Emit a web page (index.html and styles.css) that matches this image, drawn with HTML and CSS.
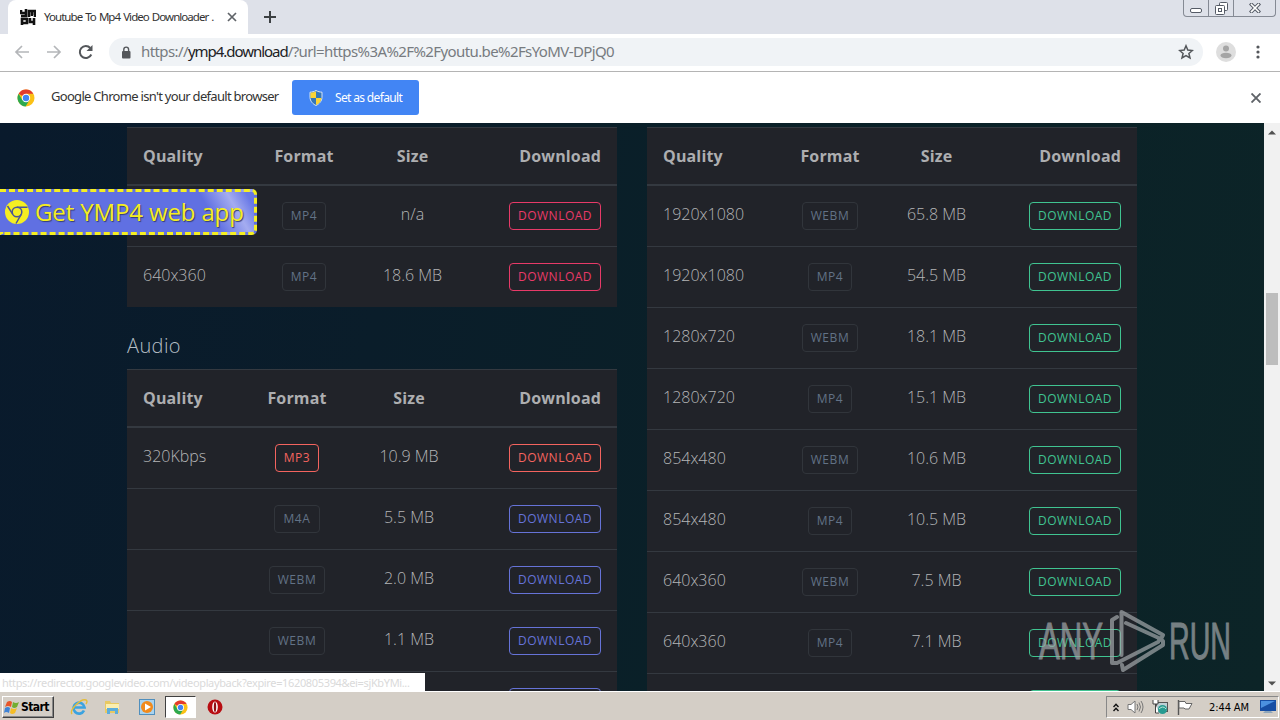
FILE: index.html
```html
<!DOCTYPE html>
<html lang="en">
<head>
    <meta charset="UTF-8">
    <title>Youtube To Mp4 Video Downloader</title>
    <link rel="stylesheet" href="styles.css">
</head>
<body>
    <svg class="defs" width="0" height="0">
        <symbol id="chrome" viewBox="0 0 18 18">
            <circle cx="9" cy="9" r="8.5" fill="#fbc116"/>
            <path d="M9 9 1.6 4.8A8.5 8.5 0 0 1 16.4 4.8H9z" fill="#e33b2e"/>
            <path d="M1.6 4.8A8.5 8.5 0 0 0 8.6 17.5L12.5 11 9 9 5.3 11z" fill="#2da94f"/>
            <circle cx="9" cy="9" r="4.2" fill="#fff"/>
            <circle cx="9" cy="9" r="3.2" fill="#4285f4"/>
        </symbol>
    </svg>

    <div class="tabstrip">
        <div class="tab">
            <svg width="16" height="16" viewBox="0 0 16 16" fill="none" stroke="#111" stroke-width="2.600">
                <path d="M1 1v3h5M6 0v7H1M9 8V2h6v6M12 2v5M2 16v-6h5v4H2M10 9v4h5M14 9v7"/>
            </svg>
            <span class="tab-title">Youtube To Mp4 Video Downloader .</span>
            <svg width="10" height="10" viewBox="0 0 10 10" stroke="#5f6368" stroke-width="1.7"><path d="M1 1l8 8M9 1l-8 8"/></svg>
        </div>
        <svg class="new-tab" width="12" height="12" viewBox="0 0 12 12" stroke="#3c4043" stroke-width="2"><path d="M6 0v12M0 6h12"/></svg>
        <div class="window-buttons">
            <span class="win-min"><svg width="12" height="5"><rect x=".5" y=".5" width="11" height="4" rx="1.5" fill="#fff" stroke="#555b66"/></svg></span>
            <span class="win-max"><svg width="13" height="13" fill="#fff" stroke="#555b66"><rect x="4.500" y=".5" width="8" height="8" rx="1"/><rect x=".5" y="3.500" width="9" height="9" rx="1"/><rect x="3.500" y="6.500" width="3" height="3"/></svg></span>
            <span class="win-close"><svg width="12" height="10" viewBox="0 0 12 10" stroke-linecap="square"><path d="M2.500 1.500l7 7M9.500 1.500l-7 7" stroke="#555b66" stroke-width="3.600"/><path d="M2.500 1.500l7 7M9.500 1.500l-7 7" stroke="#fff" stroke-width="1.600"/></svg></span>
        </div>
    </div>

    <div class="toolbar">
        <svg class="nav" width="16" height="16" viewBox="0 0 16 16" fill="none" stroke="#b4b6b9" stroke-width="1.7"><path d="M15 8H2M8 2L2 8l6 6"/></svg>
        <svg class="nav" width="16" height="16" viewBox="0 0 16 16" fill="none" stroke="#b4b6b9" stroke-width="1.7"><path d="M1 8h13M8 2l6 6-6 6"/></svg>
        <svg class="nav" width="16" height="16" viewBox="0 0 16 16" fill="none" stroke="#54575b" stroke-width="2"><path d="M13.300 10.500A6 6 0 1 1 12.300 4"/><path d="M14.500 1v6h-6z" fill="#54575b" stroke="none"/></svg>
        <div class="omnibox">
            <svg width="10" height="13" viewBox="0 0 10 13"><rect x="1" y="5" width="8.500" height="7.500" rx="1" fill="#54575b"/><path d="M2.800 5V3.500a2.400 2.400 0 0 1 4.800 0V5" fill="none" stroke="#54575b" stroke-width="1.400"/></svg>
            <span class="url">https://<b>ymp4.download</b>/?url=https%3A%2F%2Fyoutu.be%2FsYoMV-DPjQ0</span>
            <svg class="star" width="16" height="16" viewBox="0 0 16 16" fill="none" stroke="#54575b" stroke-width="1.500"><path d="M8 1.800l1.800 4.300 4.600.4-3.500 3 1.100 4.500L8 11.600 4 14l1.100-4.500-3.500-3 4.600-.4z"/></svg>
        </div>
        <svg class="avatar" width="20" height="20" viewBox="0 0 20 20"><circle cx="10" cy="10" r="10" fill="#dedede"/><circle cx="10" cy="6.500" r="3" fill="#a5a5a5"/><ellipse cx="10" cy="13.500" rx="5.500" ry="2.700" fill="#a5a5a5"/></svg>
        <svg class="menu" width="4" height="14" fill="#54575b"><circle cx="2" cy="2" r="1.600"/><circle cx="2" cy="7" r="1.600"/><circle cx="2" cy="12" r="1.600"/></svg>
    </div>

    <div class="infobar">
        <svg width="18" height="18"><use href="#chrome"/></svg>
        <span class="infobar-text">Google Chrome isn't your default browser</span>
        <button class="set-default">
            <svg width="14" height="16" viewBox="0 0 14 16"><path d="M7 .5c2 1.200 4 1.600 6 1.700v5c0 4-3 7-6 8.300C4 14.200 1 11.200 1 7.200v-5C3 2.100 5 1.700 7 .5z" fill="#3577b8" stroke="#d5e4f5"/><path d="M7 1.200V8H1.500V2.700C3.500 2.600 5.500 2.200 7 1.200zM7 8h5.500c-.3 3.500-2.800 5.900-5.500 7z" fill="#fbd435"/></svg>
            <span>Set as default</span>
        </button>
        <svg class="infobar-close" width="10" height="10" viewBox="0 0 10 10" stroke="#5f6368" stroke-width="1.900"><path d="M.5.5l9 9M9.500.5l-9 9"/></svg>
    </div>

    <div class="viewport">
        <main class="page">
            <div class="column">
                <table class="table video-table">
                    <colgroup><col class="quality"><col class="format"><col class="size"><col></colgroup>
                    <thead><tr><th>Quality</th><th>Format</th><th>Size</th><th>Download</th></tr></thead>
                    <tbody>
                        <tr><td></td><td><span class="btn muted">MP4</span></td><td>n/a</td><td><a class="btn pink">DOWNLOAD</a></td></tr>
                        <tr><td>640x360</td><td><span class="btn muted">MP4</span></td><td>18.6 MB</td><td><a class="btn pink">DOWNLOAD</a></td></tr>
                    </tbody>
                </table>
                <h5>Audio</h5>
                <table class="table audio-table">
                    <colgroup><col class="quality"><col class="format"><col class="size"><col></colgroup>
                    <thead><tr><th>Quality</th><th>Format</th><th>Size</th><th>Download</th></tr></thead>
                    <tbody>
                        <tr><td>320Kbps</td><td><span class="btn orange">MP3</span></td><td>10.9 MB</td><td><a class="btn orange">DOWNLOAD</a></td></tr>
                        <tr><td></td><td><span class="btn muted">M4A</span></td><td>5.5 MB</td><td><a class="btn indigo">DOWNLOAD</a></td></tr>
                        <tr><td></td><td><span class="btn muted">WEBM</span></td><td>2.0 MB</td><td><a class="btn indigo">DOWNLOAD</a></td></tr>
                        <tr><td></td><td><span class="btn muted">WEBM</span></td><td>1.1 MB</td><td><a class="btn indigo">DOWNLOAD</a></td></tr>
                        <tr><td></td><td></td><td></td><td><a class="btn indigo">DOWNLOAD</a></td></tr>
                    </tbody>
                </table>
            </div>
            <div class="column">
                <table class="table mute-table">
                    <colgroup><col class="quality"><col class="format"><col class="size"><col></colgroup>
                    <thead><tr><th>Quality</th><th>Format</th><th>Size</th><th>Download</th></tr></thead>
                    <tbody>
                        <tr><td>1920x1080</td><td><span class="btn muted">WEBM</span></td><td>65.8 MB</td><td><a class="btn green">DOWNLOAD</a></td></tr>
                        <tr><td>1920x1080</td><td><span class="btn muted">MP4</span></td><td>54.5 MB</td><td><a class="btn green">DOWNLOAD</a></td></tr>
                        <tr><td>1280x720</td><td><span class="btn muted">WEBM</span></td><td>18.1 MB</td><td><a class="btn green">DOWNLOAD</a></td></tr>
                        <tr><td>1280x720</td><td><span class="btn muted">MP4</span></td><td>15.1 MB</td><td><a class="btn green">DOWNLOAD</a></td></tr>
                        <tr><td>854x480</td><td><span class="btn muted">WEBM</span></td><td>10.6 MB</td><td><a class="btn green">DOWNLOAD</a></td></tr>
                        <tr><td>854x480</td><td><span class="btn muted">MP4</span></td><td>10.5 MB</td><td><a class="btn green">DOWNLOAD</a></td></tr>
                        <tr><td>640x360</td><td><span class="btn muted">WEBM</span></td><td>7.5 MB</td><td><a class="btn green">DOWNLOAD</a></td></tr>
                        <tr><td>640x360</td><td><span class="btn muted">MP4</span></td><td>7.1 MB</td><td><a class="btn green">DOWNLOAD</a></td></tr>
                        <tr><td></td><td></td><td></td><td><a class="btn green">DOWNLOAD</a></td></tr>
                    </tbody>
                </table>
            </div>
        </main>

        <div class="scrollbar">
            <svg width="8" height="5" fill="#505050"><path d="M0 4.500L4 .5l4 4z"/></svg>
            <div class="thumb"></div>
            <svg width="8" height="5" fill="#505050"><path d="M0 .5l4 4 4-4z"/></svg>
        </div>

        <a class="web-app">
            <svg width="24" height="24" viewBox="0 0 24 24"><circle cx="12" cy="12" r="12" fill="#f5ee22"/><circle cx="12" cy="12" r="4.800" fill="none" stroke="#4c5596" stroke-width="1.500"/><path d="M12 7.200h10.500M7.800 14.400L2.500 6M16.200 14.400L11 23.500" stroke="#4c5596" stroke-width="1.500"/></svg>
            <span>Get YMP4 web app</span>
        </a>
        <div class="status">https://redirector.googlevideo.com/videoplayback?expire=1620805394&amp;ei=sjKbYMi...</div>
        <svg class="watermark" width="196" height="64" viewBox="0 0 196 64">
            <g fill="#a3a8ab" stroke="#a3a8ab" font-size="51">
                <text x="1" y="50" textLength="64" lengthAdjust="spacingAndGlyphs">ANY</text>
                <text x="131" y="50" textLength="62" lengthAdjust="spacingAndGlyphs">RUN</text>
            </g>
            <path d="M79 8l-5 3v43h5l41-21M83.500 46V3L125 26l-2 4-35-16M84 56l1 5 40-25v-4l-4-2" fill="none" stroke="#a3a8ab" stroke-width="4" stroke-linejoin="round" stroke-linecap="round"/>
        </svg>
    </div>

    <div class="taskbar">
        <button class="start">
            <svg width="16" height="16" viewBox="0 0 16 16"><path d="M3 3q3-2 5 0L7 8Q4 6 1 8z" fill="#e8562a"/><path d="M9 3q3 2 6 0l-2 5q-3 2-5 0z" fill="#73ae32"/><path d="M1 9q3-2 5 0l-1 5q-3-2-5 0z" fill="#3f83d6"/><path d="M7 9q3 2 6 0l-2 5q-3 2-5 0z" fill="#f5bd26"/></svg>
            <span>Start</span>
        </button>
        <div class="launchers">
            <span class="launcher"><svg width="18" height="18" viewBox="0 0 18 18" fill="none"><path d="M14 12.500a5.500 5.500 0 1 1 .5-3H5" stroke="#3ba3e0" stroke-width="2.700"/><path d="M2 16C-1 12 11 0 16 2q2 1 0 4" stroke="#e5bd38" stroke-width="1.400"/></svg></span>
            <span class="launcher"><svg width="17" height="16" viewBox="0 0 17 16"><path d="M1 2h5l1 2h8v10H1z" fill="#e8c963"/><path d="M2 5h13v5H2z" fill="#fbeeb0"/><path d="M3 15V9h11v6h-3v-3H6v3z" fill="#5caddc"/></svg></span>
            <span class="launcher"><svg width="16" height="16" viewBox="0 0 16 16"><rect x=".5" y=".5" width="15" height="15" fill="#a9d3ef" stroke="#508fbd"/><circle cx="8" cy="8" r="6" fill="#f18a1c"/><path d="M6 4.500v7L12 8z" fill="#fff"/></svg></span>
            <span class="launcher active"><svg width="15" height="15"><use href="#chrome"/></svg></span>
            <span class="launcher"><svg width="16" height="16" viewBox="0 0 16 16"><circle cx="8" cy="8" r="7.500" fill="#b80d12"/><ellipse cx="8" cy="8" rx="2.800" ry="5.500" fill="#fff"/><ellipse cx="8" cy="8" rx="1.200" ry="5" fill="#901014"/></svg></span>
        </div>
        <div class="tray">
            <svg width="6" height="9" viewBox="0 0 6 9" fill="none" stroke="#111" stroke-width="1.400"><path d="M.5 4L3 1.200 5.500 4M.5 8L3 5.200 5.500 8"/></svg>
            <svg width="17" height="14" viewBox="0 0 17 14" fill="none" stroke="#777"><path d="M1 4.500h3L8 1v12L4 9.500H1z" fill="#fff"/><path d="M10 4q2 3 0 6M12 2.500q3 4.500 0 9M14 1q4 6 0 12"/></svg>
            <svg width="17" height="16" viewBox="0 0 17 16"><rect x="4.500" y="3.500" width="11" height="9" fill="#bdd0d5" stroke="#555"/><path d="M1 1v4h5V1M3.500 5v9H7" fill="#fff" stroke="#444"/><circle cx="10.500" cy="10.500" r="4.500" fill="#279b91"/><path d="M7 10q4-4 7 0" fill="none" stroke="#b7e5d5"/></svg>
            <svg width="16" height="15" viewBox="0 0 16 15"><path d="M1.500 0v15" stroke="#555" stroke-width="1.400"/><path d="M2 1.500h6l1 2h6L12 9H8L7 8H2z" fill="#fff" stroke="#666"/></svg>
            <span class="clock">2:44 AM</span>
            <svg width="16" height="14" viewBox="0 0 16 14"><rect width="16" height="11" fill="#174ea3"/><path d="M1 1h14L1 8z" fill="#4c91df"/><path d="M5 11h6l2 2H3z" fill="#8fa6ba"/></svg>
        </div>
    </div>
</body>
</html>
```
FILE: styles.css
```css
* {
    box-sizing: border-box;
}

body {
    margin: 0;
    width: 1280px;
    height: 720px;
    overflow: hidden;
    display: flex;
    flex-direction: column;
    background: #fff;
    font-family: "DejaVu Sans Condensed", "DejaVu Sans", sans-serif;
}

svg {
    display: block;
    flex: none;
}

.defs {
    display: none;
}

/* Browser window */
.tabstrip {
    height: 34px;
    flex: none;
    display: flex;
    background: #dee1e9;
    padding-left: 8px;
}

.tab {
    width: 240px;
    display: flex;
    align-items: center;
    padding: 0 11px 0 12px;
    background: #fff;
    border-radius: 8px 8px 0 0;
}

.tab-title {
    width: 170px;
    margin: 0 13px 0 8px;
    padding-bottom: 2px;
    white-space: nowrap;
    font: 11.5px "Noto Sans", sans-serif;
    letter-spacing: -0.95px;
    word-spacing: 1px;
    color: #333;
}

.new-tab {
    margin: 11px 0 0 16px;
}

.window-buttons {
    display: flex;
    height: 17px;
    margin: 0 4px 0 auto;
    border: 1px solid #858a94;
    border-top: 0;
    border-radius: 0 0 4px 4px;
}

.window-buttons span {
    display: flex;
    justify-content: center;
    align-items: center;
    border-right: 1px solid #858a94;
}

.win-min {
    width: 25px;
    padding-top: 5px;
}

.win-max {
    width: 25px;
}

.window-buttons .win-close {
    width: 41px;
    border: 0;
}

.toolbar {
    height: 38px;
    flex: none;
    display: flex;
    align-items: center;
    padding: 0 20px 1px 14px;
    border-bottom: 1px solid #b4b4b4;
}

.nav {
    margin-right: 16px;
}

.omnibox {
    width: 1094px;
    height: 28px;
    margin-left: -1px;
    display: flex;
    align-items: center;
    padding: 0 9px 0 12px;
    border-radius: 14px;
    background: #f0f3f6;
}

.url {
    margin-left: 10px;
    padding-bottom: 2px;
    font: 15px "Noto Sans", sans-serif;
    letter-spacing: -0.6px;
    color: #777b80;
    white-space: nowrap;
}

.url b {
    font-weight: 400;
    letter-spacing: -1.03px;
    color: #202124;
}

.star {
    margin-left: auto;
}

.avatar {
    margin-left: 13px;
}

.menu {
    margin-left: auto;
}

.infobar {
    height: 51px;
    flex: none;
    display: flex;
    align-items: center;
    padding: 0 19px 0 17px;
}

.infobar-text {
    width: 228px;
    margin: 0 13px 0 16px;
    padding-bottom: 3px;
    font: 13px "Noto Sans", sans-serif;
    letter-spacing: -0.7px;
    white-space: nowrap;
    color: #333;
}

.set-default {
    width: 127px;
    height: 35px;
    display: flex;
    align-items: center;
    gap: 12px;
    padding: 0 0 0 17px;
    border: 0;
    border-radius: 3px;
    background: #4285f4;
    color: #fff;
    font: 12px "Noto Sans", sans-serif;
    letter-spacing: -0.65px;
}

.infobar-close {
    margin-left: auto;
}

/* Web page */
.viewport {
    position: relative;
    height: 568px;
    flex: none;
    display: flex;
    overflow: hidden;
    font-family: "Open Sans", sans-serif;
}

.page {
    width: 1264px;
    display: flex;
    gap: 30px;
    padding: 4px 0 0 127px;
    background: linear-gradient(100deg, #091a2c 0%, #0a1d2a 30%, #0a2028 55%, #0c2427 100%);
}

.column {
    width: 490px;
}

.table {
    width: 490px;
    table-layout: fixed;
    border-spacing: 0;
    background: #212329;
    color: #b4b5b7;
    font-size: 16px;
    font-weight: 300;
    line-height: 24px;
}

.video-table .quality { width: 112px; }
.video-table .format { width: 130px; }
.video-table .size { width: 87px; }
.audio-table .quality { width: 98px; }
.audio-table .format { width: 144px; }
.audio-table .size { width: 80px; }
.mute-table .quality { width: 123px; }
.mute-table .format { width: 120px; }
.mute-table .size { width: 93px; }

.table th,
.table td {
    padding: 16px 0;
    border-top: 1px solid #343940;
    text-align: center;
    vertical-align: top;
    white-space: nowrap;
}

.table th {
    border-bottom: 2px solid #343940;
    color: #adaeb0;
    font-weight: 700;
    letter-spacing: 0.15px;
}

.table td {
    height: 61px;
}

.table tbody tr:first-child td {
    height: 60px;
    border-top: 0;
}

.table th:first-child,
.table td:first-child {
    padding-left: 16px;
    text-align: left;
}

.table th:last-child,
.table td:last-child {
    padding-right: 16px;
    text-align: right;
}

.btn {
    display: inline-block;
    height: 28px;
    padding: 0 8px;
    border: 1px solid;
    border-radius: 4px;
    font-size: 12px;
    font-weight: 400;
    line-height: 26px;
    letter-spacing: 0.6px;
    vertical-align: top;
}

a.btn {
    width: 92px;
    letter-spacing: 0.5px;
}

.muted {
    color: #627286;
    border-color: #31353b;
}

.pink { color: #e83a68; }
.orange { color: #f4645f; }
.indigo { color: #6673d8; }
.green { color: #40c491; }

h5 {
    height: 62px;
    margin: 0;
    padding-top: 24px;
    font-size: 20px;
    font-weight: 300;
    line-height: 30px;
    letter-spacing: 0.4px;
    color: #b5bec5;
}

.scrollbar {
    width: 16px;
    display: flex;
    flex-direction: column;
    align-items: center;
    padding: 7px 0 5px;
    background: #f1f1f1;
}

.thumb {
    width: 12px;
    height: 72px;
    margin: 158px 0 auto;
    background: #bdbdbd;
}

.web-app {
    position: absolute;
    top: 66px;
    left: 0;
    width: 257px;
    height: 46px;
    display: flex;
    align-items: center;
    gap: 6px;
    padding-left: 5px;
    border: 3px dashed #f5ee22;
    border-left: 0;
    border-radius: 0 5px 5px 0;
    background: linear-gradient(60deg, #6070e2 80%, #a4acf0 90%, #6878e6 97%);
    color: #f5ee22;
    font-size: 24px;
    letter-spacing: -0.13px;
    white-space: nowrap;
    text-shadow: 1px 1px 1px #343d73;
}

.web-app span {
    padding-bottom: 2px;
}

.status {
    position: absolute;
    left: 0;
    bottom: 0;
    width: 425px;
    height: 18px;
    padding-left: 2px;
    background: #fff;
    color: #dadada;
    font: 11px/19px "Noto Sans", sans-serif;
    letter-spacing: -0.35px;
    white-space: nowrap;
    overflow: hidden;
}

.watermark {
    position: absolute;
    left: 1038px;
    top: 486px;
    opacity: 0.7;
    font-family: "Liberation Sans", sans-serif;
}

/* Desktop taskbar */
.taskbar {
    flex: 1;
    display: flex;
    align-items: center;
    background: #d4cec6;
    border-top: 1px solid #fff;
    padding: 2px 1px 0 2px;
}

.start {
    width: 52px;
    height: 22px;
    display: flex;
    align-items: center;
    gap: 1px;
    padding: 0 0 0 1px;
    border: 1px solid;
    border-color: #fff #404040 #404040 #fff;
    background: #d4cec6;
    box-shadow: inset -1px -1px #888;
    color: #000;
    font: bold 12px "DejaVu Sans Condensed", sans-serif;
    letter-spacing: -0.6px;
}

.launchers {
    display: flex;
    gap: 3px;
    margin-left: 9px;
}

.launcher {
    width: 31px;
    height: 22px;
    display: flex;
    align-items: center;
    justify-content: center;
}

.launcher.active {
    background: #fff;
    border: 1px solid;
    border-color: #404040 #fff #fff #404040;
}

.tray {
    width: 173px;
    height: 22px;
    display: flex;
    align-items: center;
    gap: 8px;
    margin-left: auto;
    padding-left: 6px;
    border: 1px solid;
    border-color: #888 #fff #fff #888;
}

.clock {
    width: 42px;
    margin: 0 1px 0 8px;
    font-size: 11px;
    letter-spacing: -0.1px;
    white-space: nowrap;
}
```
